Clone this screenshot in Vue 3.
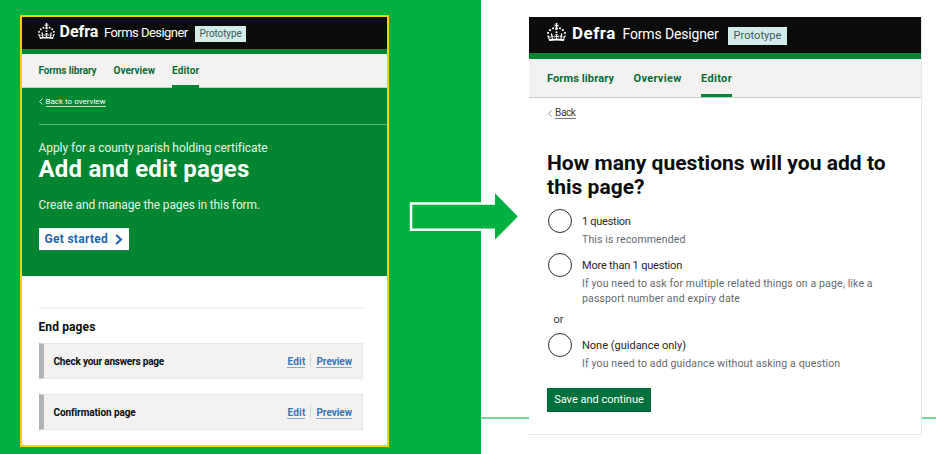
<script setup>
import { h } from 'vue'

const crownPath =
  'M22.6 10.4c-1 .4-2-.1-2.4-1-.4-.9.1-2 1-2.4.9-.4 2 .1 2.4 1s-.1 2-1 2.4m-5.9 6.7c-.9.4-2-.1-2.4-1-.4-.9.1-2 1-2.4.9-.4 2 .1 2.4 1s-.1 2-1 2.4m10.8-3.7c-1 .4-2-.1-2.4-1-.4-.9.1-2 1-2.4.9-.4 2 .1 2.4 1s0 2-1 2.4m3.3 4.8c-1 .4-2-.1-2.4-1-.4-.9.1-2 1-2.4.9-.4 2 .1 2.4 1s-.1 2-1 2.4M17 4.7l2.3 1.2V2.5l-2.3.7-.2-.2.9-3h-3.4l.9 3-.2.2c-.1.1-2.3-.7-2.3-.7v3.4L15 4.7c.1.1.1.2.2.2l-1.3 4c-.1.2-.1.4-.1.6 0 1.1.8 2 1.9 2.2h.7c1-.2 1.9-1.1 1.9-2.1 0-.2 0-.4-.1-.6l-1.3-4c-.1-.2 0-.2.1-.3m-7.6 5.7c.9.4 2-.1 2.4-1 .4-.9-.1-2-1-2.4-.9-.4-2 .1-2.4 1s0 2 1 2.4m-5 3c.9.4 2-.1 2.4-1 .4-.9-.1-2-1-2.4-.9-.4-2 .1-2.4 1s.1 2 1 2.4m-3.2 4.8c.9.4 2-.1 2.4-1 .4-.9-.1-2-1-2.4-.9-.4-2 .1-2.4 1s0 2 1 2.4m14.8 11c4.4 0 8.6.3 12.3.8 1.1-4.5 2.4-7 3.7-8.8l-2.5-.9c.2 1.3.3 1.9 0 2.7-.4-.4-.8-1.1-1.1-2.3l-1.2 4c.7-.5 1.3-.8 2-.9-1.1 2.5-2.6 3.1-3.5 3-1.1-.2-1.7-1.2-1.5-2.1.3-1.2 1.5-1.5 2.1-.1 1.1-2.3-.8-3-2-2.3 1.9-1.9 2.1-3.5.6-5.6-2.1 1.6-2.1 3.2-1.2 5.5-1.2-1.4-3.2-.6-2.5 1.6.9-1.4 2.1-.5 1.9.8-.2 1.1-1.7 2.1-3.5 1.9-2.7-.2-2.9-2.1-2.9-3.6.7-.1 1.9.5 2.9 1.9l.4-4.3c-1.1 1.1-2.1 1.4-3.2 1.4.4-1.2 2.1-3 2.1-3h-5.4s1.7 1.9 2.1 3c-1.1 0-2.1-.2-3.2-1.4l.4 4.3c1-1.4 2.2-2 2.9-1.9-.1 1.5-.2 3.4-2.9 3.6-1.9.2-3.4-.8-3.5-1.9-.2-1.3 1-2.2 1.9-.8.7-2.3-1.2-3-2.5-1.6.9-2.2.9-3.9-1.2-5.5-1.5 2-1.3 3.7.6 5.6-1.2-.7-3.1 0-2 2.3.6-1.4 1.8-1.1 2.1.1.2.9-.3 1.9-1.5 2.1-.9.2-2.4-.5-3.5-3 .6 0 1.2.3 2 .9l-1.2-4c-.3 1.1-.7 1.9-1.1 2.3-.3-.8-.2-1.4 0-2.7l-2.9.9C1.3 23 2.6 25.5 3.7 30c3.7-.5 7.9-.8 12.3-.8'

const Crown = () =>
  h('svg', { viewBox: '0 0 32 30', fill: 'currentColor', 'aria-hidden': 'true' }, [
    h('path', { d: crownPath }),
  ])

const tabs = [
  { label: 'Forms library', key: 'library' },
  { label: 'Overview', key: 'summary' },
  { label: 'Editor', key: 'editor' },
]

const endPages = ['Check your answers page', 'Confirmation page']

const options = [
  { label: '1 question', hint: 'This is recommended', key: 'one' },
  {
    label: 'More than 1 question',
    hint: 'If you need to ask for multiple related things on a page, like a passport number and expiry date',
    key: 'many',
  },
  {
    label: 'None (guidance only)',
    hint: 'If you need to add guidance without asking a question',
    key: 'none',
    divider: true,
  },
]
</script>

<template>
  <main class="slide">
    <section class="side side-from">
      <article class="screen overview">
        <header class="masthead">
          <Crown class="crown" />
          <span class="brand">Defra</span>
          <span class="product">Forms Designer</span>
          <span class="tag">Prototype</span>
        </header>
        <nav class="tabs">
          <a v-for="t in tabs" :key="t.key" class="tab" :class="[t.key, { active: t.key === 'editor' }]">{{ t.label }}</a>
        </nav>
        <div class="hero">
          <div class="back">
            <svg class="chevron" viewBox="0 0 4 7"><path d="M3.5 .5 .7 3.5l2.8 3" /></svg>
            <a class="back-link">Back to overview</a>
          </div>
          <p class="caption">Apply for a county parish holding certificate</p>
          <h1 class="title">Add and edit pages</h1>
          <p class="lead">Create and manage the pages in this form.</p>
          <button class="start">
            <span>Get started</span>
            <svg class="start-icon" viewBox="0 0 8 11"><path d="M1.2 1 6 5.5 1.2 10" /></svg>
          </button>
        </div>
        <div class="pages">
          <h2 class="subtitle">End pages</h2>
          <div v-for="(p, i) in endPages" :key="p" class="page-row">
            <span class="page-name" :class="{ first: i === 0 }">{{ p }}</span>
            <a class="link edit">Edit</a>
            <a class="link preview">Preview</a>
          </div>
        </div>
      </article>
    </section>

    <section class="side side-to">
      <article class="screen question">
        <header class="masthead">
          <Crown class="crown" />
          <span class="brand">Defra</span>
          <span class="product">Forms Designer</span>
          <span class="tag">Prototype</span>
        </header>
        <nav class="tabs">
          <a v-for="t in tabs" :key="t.key" class="tab" :class="[t.key, { active: t.key === 'editor' }]">{{ t.label }}</a>
        </nav>
        <form class="form">
          <div class="back">
            <svg class="chevron" viewBox="0 0 4 7"><path d="M3.5 .5 .7 3.5l2.8 3" /></svg>
            <a class="back-link">Back</a>
          </div>
          <h1 class="title">How many questions will you add to this page?</h1>
          <template v-for="o in options" :key="o.key">
            <p v-if="o.divider" class="or">or</p>
            <div class="option" :class="o.key">
              <span class="radio"></span>
              <div class="option-text">
                <span class="label">{{ o.label }}</span>
                <span class="hint">{{ o.hint }}</span>
              </div>
            </div>
          </template>
          <button type="button" class="save">Save and continue</button>
        </form>
      </article>
    </section>

    <svg class="arrow" viewBox="406 190 116 54">
      <path d="M412.3 204.7H495V193.3L517.8 216.5 495 239.6V228.4H412.3Z" />
    </svg>
  </main>
</template>

<style>
body {
  margin: 0;
}
</style>

<style scoped>
.slide {
  position: relative;
  display: flex;
  width: 936px;
  height: 454px;
  overflow: hidden;
  background: #fff;
  font-family: Roboto, "Liberation Sans", sans-serif;
  color: #0b0c0c;
}
h1, h2, p { margin: 0; }
button { border: 0; font-family: inherit; }
.side { box-sizing: border-box; display: flex; align-items: flex-start; }
.side-from { width: 481px; padding: 15px 0 0 20px; background: #00b041; }
.side-to {
  width: 455px;
  padding: 17px 0 0 48px;
  background: linear-gradient(#74d898, #74d898) 0 417px / 100% 2px no-repeat;
}
.screen { box-sizing: border-box; background: #fff; }

.masthead {
  box-sizing: border-box;
  display: flex;
  align-items: baseline;
  background: #0b0c0c;
  color: #fff;
  white-space: nowrap;
}
.crown { align-self: flex-start; flex: none; }
.brand { font-weight: 700; }
.tag { background: #d3ece9; color: #3d5c5c; }
.tabs { box-sizing: border-box; display: flex; background: #f3f2f1; }
.tab { box-sizing: border-box; color: #0b6b34; font-weight: 700; white-space: nowrap; }
.tab.active { border-bottom: 3px solid #008531; }
.back { display: flex; align-items: center; }
.chevron { fill: none; stroke: currentColor; stroke-width: .8; }

/* Overview screen */
.overview { width: 369px; height: 432px; border: 2px solid #fdd000; }
.overview .masthead { height: 37px; padding: 5px 0 0 16px; border-bottom: 5px solid #008531; line-height: 20px; }
.overview .crown { width: 17px; height: 16px; margin: .5px 4.5px 0 0; }
.overview .brand { width: 44.5px; font-size: 16px; }
.overview .product { width: 91px; font-size: 13px; letter-spacing: -.55px; }
.overview .tag { width: 51px; box-sizing: border-box; padding-left: 4.5px; font-size: 10px; line-height: 16px; letter-spacing: -.1px; }
.overview .tabs { height: 34px; padding-left: 16.5px; border-bottom: 1px solid #c4d3c4; }
.overview .tab { height: 34px; font-size: 10px; line-height: 34px; }
.overview .library { margin-right: 17px; letter-spacing: -.12px; }
.overview .summary { margin-right: 17px; }
.overview .editor { letter-spacing: .17px; }
.hero { height: 188px; background: #008531; color: #fff; padding-left: 16.5px; overflow: hidden; }
.hero .back { margin-top: 7px; height: 12px; padding-bottom: 17px; border-bottom: 1px solid #66b683; font-size: 8px; line-height: 12px; }
.hero .chevron { width: 4px; height: 7px; margin-right: 3px; }
.hero .back-link { padding-top: 1px; border-bottom: .8px solid #c0e0cb; line-height: 9px; }
.caption { margin-top: 16px; font-size: 12px; line-height: 14px; letter-spacing: -.06px; color: #e6f3ea; }
.overview .title { font-size: 24px; line-height: 28px; letter-spacing: .22px; }
.lead { margin-top: 15px; font-size: 12px; line-height: 14px; letter-spacing: -.12px; color: #e6f3ea; }
.start {
  display: flex;
  align-items: center;
  gap: 6.5px;
  width: 90.5px;
  height: 22px;
  margin-top: 16px;
  padding: 0 0 0 6px;
  background: #fff;
  box-shadow: 0 1px 0 #24766b;
  color: #2066b4;
  font-size: 12px;
  font-weight: 700;
  letter-spacing: .3px;
}
.start-icon { width: 8px; height: 11px; fill: none; stroke: currentColor; stroke-width: 2.2; }
.pages { margin: 31px 24px 0 16.5px; border-top: 2px solid #f1f1f0; padding-top: 11px; }
.subtitle { margin-bottom: 9px; font-size: 12px; line-height: 14px; letter-spacing: .12px; }
.page-row {
  box-sizing: border-box;
  display: flex;
  align-items: center;
  height: 36px;
  margin-bottom: 15px;
  padding: 1px 10px 0 10px;
  border: 1.5px solid #e5e6e6;
  border-left: 5px solid #b1b4b6;
  background: #f3f2f1;
  font-size: 10px;
  font-weight: 700;
}
.page-name { flex: 1; letter-spacing: -.08px; }
.page-name.first { letter-spacing: -.2px; }
.link { padding-top: 1px; color: #3475bb; line-height: 10px; border-bottom: 1px solid #84a9d2; }
.edit { margin-right: 5px; letter-spacing: .2px; }
.preview { position: relative; margin-left: 6px; letter-spacing: -.04px; }
.preview::before { content: ""; position: absolute; left: -6px; top: -2px; width: 1px; height: 13px; background: #d0d2d3; }

/* Question screen */
.question { width: 393px; height: 418px; border: solid #e6e6e6; border-width: 0 1px 1px 0; }
.question .masthead { height: 41.5px; padding: 6px 0 0 18px; border-bottom: 6.5px solid #008531; line-height: 20px; }
.question .crown { width: 19px; height: 18px; margin: -.5px 6px 0 0; }
.question .brand { width: 50.5px; font-size: 17px; letter-spacing: .5px; }
.question .product { width: 105.5px; font-size: 14px; letter-spacing: -.15px; }
.question .tag { width: 58.5px; box-sizing: border-box; padding-left: 5.5px; font-size: 11px; line-height: 18px; letter-spacing: .06px; }
.question .tabs { height: 39.5px; padding-left: 18px; border-bottom: 1px solid #c9cbcc; }
.question .tab { height: 38.5px; font-size: 11px; line-height: 39.5px; }
.question .library { margin-right: 19.5px; letter-spacing: .12px; }
.question .summary { margin-right: 19.5px; letter-spacing: .29px; }
.question .editor { letter-spacing: .33px; }
.form { padding-left: 18px; }
.question .back { padding-top: 9px; font-size: 10px; line-height: 13px; letter-spacing: -.35px; color: #3a3c3c; }
.question .chevron { width: 4px; height: 7px; margin: 0 3.5px 0 .5px; color: #777; }
.question .back-link { border-bottom: 1px solid #777; line-height: 11px; }
.question .title { width: 350px; margin-top: 32px; font-size: 21px; line-height: 24px; letter-spacing: .03px; }
.option { display: flex; gap: 10px; padding-left: 1px; }
.option.one { margin-top: 10px; height: 44px; }
.option.many { height: 61px; }
.option.none { height: 54px; }
.radio { box-sizing: border-box; flex: none; width: 24px; height: 24px; border: 1.8px solid #2c2d2d; border-radius: 50%; }
.option-text { display: flex; flex-direction: column; width: 300px; padding-top: 5px; }
.label { font-size: 11px; line-height: 15px; color: #252828; }
.one .label { letter-spacing: -.28px; }
.many .label { letter-spacing: -.19px; }
.hint { margin-top: 3px; font-size: 10.5px; line-height: 15px; letter-spacing: .14px; color: #626a6f; }
.or { height: 17px; margin-bottom: 2px; padding-left: 6.5px; font-size: 11px; line-height: 11px; color: #3a3c3c; }
.save {
  display: block;
  width: 104px;
  height: 24px;
  margin-top: 1px;
  padding: 0;
  background: #00703c;
  box-shadow: inset 0 -1px 0 #0b5a3a;
  color: #fff;
  font-size: 11px;
  line-height: 24px;
  text-align: center;
}

.arrow { position: absolute; left: 406px; top: 190px; width: 116px; height: 54px; }
.arrow path { fill: #00b041; stroke: #fff; stroke-width: 5; paint-order: stroke; }
</style>
